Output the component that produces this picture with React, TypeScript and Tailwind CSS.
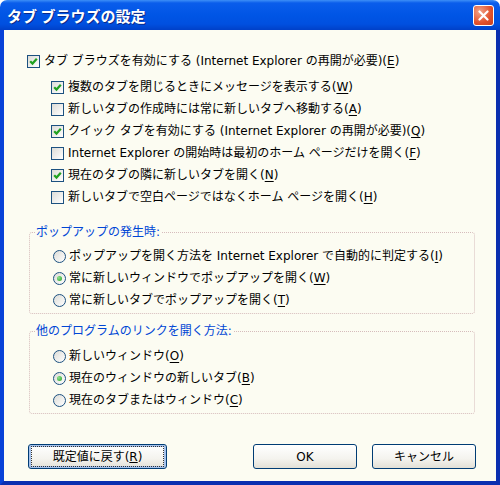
import React from "react";

const FONT = "font-['DejaVu_Sans','Noto_Sans_CJK_JP',sans-serif]";

const checkRows = [
  { checked: true, text: "複数のタブを閉じるときにメッセージを表示する", key: "W" },
  { checked: false, text: "新しいタブの作成時には常に新しいタブへ移動する", key: "A" },
  { checked: true, text: "クイック タブを有効にする (Internet Explorer の再開が必要)", key: "Q" },
  { checked: false, text: "Internet Explorer の開始時は最初のホーム ページだけを開く", key: "F" },
  { checked: true, text: "現在のタブの隣に新しいタブを開く", key: "N" },
  { checked: false, text: "新しいタブで空白ページではなくホーム ページを開く", key: "H" },
];

const popupRows = [
  { checked: false, text: "ポップアップを開く方法を Internet Explorer で自動的に判定する", key: "I" },
  { checked: true, text: "常に新しいウィンドウでポップアップを開く", key: "W" },
  { checked: false, text: "常に新しいタブでポップアップを開く", key: "T" },
];

const linkRows = [
  { checked: false, text: "新しいウィンドウ", key: "O" },
  { checked: true, text: "現在のウィンドウの新しいタブ", key: "B" },
  { checked: false, text: "現在のタブまたはウィンドウ", key: "C" },
];

const Label = ({ text, k }: { text: string; k: string }) => (
  <span className="whitespace-pre">
    {text}(<u className="underline-offset-2">{k}</u>)
  </span>
);

const CheckBox = ({ checked }: { checked: boolean }) => (
  <span className="flex h-[13px] w-[13px] shrink-0 items-center justify-center border border-[#1c5180] bg-[linear-gradient(135deg,#dcdcd7,#ffffff)]">
    {checked && (
      <svg width="9" height="9" viewBox="0 0 9 9">
        <path d="M1.2 4.2 L3.5 6.6 L7.8 1.8" fill="none" stroke="#21a121" strokeWidth="2.2" />
      </svg>
    )}
  </span>
);

const Radio = ({ checked }: { checked: boolean }) => (
  <span className="flex h-[13px] w-[13px] shrink-0 items-center justify-center rounded-full border border-[#1c5180] bg-[linear-gradient(135deg,#dcdcd7,#ffffff)]">
    {checked && (
      <span className="h-[5px] w-[5px] rounded-full bg-[radial-gradient(circle_at_35%_35%,#8ee28e,#21a121)]" />
    )}
  </span>
);

const Group = ({ title, rows, gap }: { title: string; rows: typeof popupRows; gap: string }) => (
  <fieldset className="ml-[2px] w-[446px] rounded-[3px] border border-dotted border-[#d6bcbc] pb-[2px] pl-[5px]">
    <legend className="px-[1px] leading-[14px] text-[#0046d5]">{title}</legend>
    <div className={`${gap} flex flex-col pl-[18px]`}>
      {rows.map((r, i) => (
        <div key={i} className="flex h-[22px] items-center gap-[3px]">
          <Radio checked={r.checked} />
          <Label text={r.text} k={r.key} />
        </div>
      ))}
    </div>
  </fieldset>
);

const Button = ({ children, width, focused }: { children: React.ReactNode; width: string; focused?: boolean }) => (
  <button
    className={`flex h-[25px] ${width} items-center justify-center rounded-[3px] border border-[#003c74] bg-[linear-gradient(180deg,#ffffff_0%,#f4f3ee_60%,#e3e0d6_100%)] ${
      focused ? "shadow-[inset_0_0_0_2px_#a6c2ec]" : ""
    }`}
  >
    <span className={`flex h-[19px] w-[calc(100%-6px)] items-center justify-center ${focused ? "outline outline-1 outline-dotted outline-[#333]" : ""}`}>
      {children}
    </span>
  </button>
);

export default function App() {
  return (
    <div className={`flex h-[485px] w-[500px] flex-col text-[12px] text-black ${FONT}`}>
      <div className="flex h-[30px] shrink-0 items-center justify-between rounded-t-[7px] bg-[linear-gradient(180deg,#3d8ff7_0%,#0a5deb_10%,#0055e5_50%,#0050e0_80%,#0040c8_100%)] pl-[7px] pr-[6px]">
        <span className="font-['Noto_Sans_CJK_JP',sans-serif] text-[15px] font-bold leading-none text-white [text-shadow:1px_1px_#0a2a8a]">
          タブ ブラウズの設定
        </span>
        <span className="flex h-[21px] w-[21px] items-center justify-center rounded-[3px] border border-white bg-[radial-gradient(circle_at_30%_30%,#f0a48a,#e2512c_60%,#c8401e)]">
          <svg width="11" height="11" viewBox="0 0 11 11">
            <path d="M1.5 1.5 L9.5 9.5 M9.5 1.5 L1.5 9.5" stroke="#ffffff" strokeWidth="2.2" strokeLinecap="round" />
          </svg>
        </span>
      </div>

      <div className="flex flex-1 flex-col border-x-4 border-b-4 border-l-[#0842d8] border-r-[#0a2fb0] border-b-[#0a2fb0] bg-[#fcfcf2] pl-[23px] pr-[16px] pt-[20px]">
        <div className="flex h-[22px] items-center gap-[4px]">
          <CheckBox checked />
          <Label text="タブ ブラウズを有効にする (Internet Explorer の再開が必要)" k="E" />
        </div>
        <div className="mt-[4px] flex flex-col pl-[24px]">
          {checkRows.map((r, i) => (
            <div key={i} className="flex h-[22px] items-center gap-[4px]">
              <CheckBox checked={r.checked} />
              <Label text={r.text} k={r.key} />
            </div>
          ))}
        </div>

        <div className="mt-[17px]">
          <Group title="ポップアップの発生時:" rows={popupRows} gap="mt-[6px]" />
        </div>
        <div className="mt-[10px]">
          <Group title="他のプログラムのリンクを開く方法:" rows={linkRows} gap="mt-[7px]" />
        </div>

        <div className="mt-[30px] flex items-center pl-[1px]">
          <Button width="w-[139px]" focused>
            既定値に戻す(<u>R</u>)
          </Button>
          <div className="ml-auto flex gap-[15px] pr-[4px]">
            <Button width="w-[104px]">OK</Button>
            <Button width="w-[104px]">キャンセル</Button>
          </div>
        </div>
      </div>
    </div>
  );
}
